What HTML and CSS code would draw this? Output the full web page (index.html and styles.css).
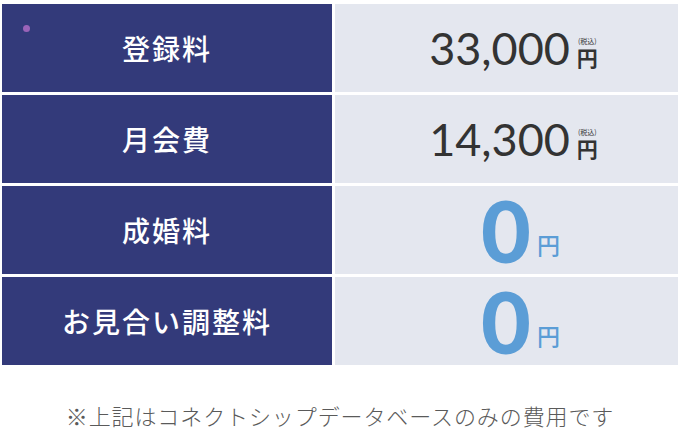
FILE: index.html
```html
<!DOCTYPE html>
<html lang="ja">
<head>
<meta charset="utf-8">
<link rel="stylesheet" href="styles.css">
</head>
<body>
<div class="page">
  <div class="fees">
    <div class="label first"><span class="dot"></span>登録料</div>
    <div class="value price"><span class="num">33,000</span><span class="yen-wrap"><span class="tax">(税込)</span><span class="yen">円</span></span></div>

    <div class="label">月会費</div>
    <div class="value price"><span class="num">14,300</span><span class="yen-wrap"><span class="tax">(税込)</span><span class="yen">円</span></span></div>

    <div class="label">成婚料</div>
    <div class="value free"><span class="zero">0</span><span class="yen-blue">円</span></div>

    <div class="label">お見合い調整料</div>
    <div class="value free"><span class="zero">0</span><span class="yen-blue">円</span></div>
  </div>
  <p class="note">※上記はコネクトシップデータベースのみの費用です</p>
</div>
</body>
</html>
```

FILE: styles.css
```css
* { box-sizing: border-box; }
html, body { margin: 0; padding: 0; background: #ffffff; }
body { width: 680px; height: 441px; overflow: hidden; font-family: "Noto Sans CJK JP", "Noto Sans", sans-serif; }

.page { padding: 4px 2px 0 2px; }

.fees {
  display: grid;
  grid-template-columns: 330px 343px;
  grid-auto-rows: 88px;
  gap: 3px;
}

.label {
  position: relative;
  background: #333a7a;
  color: #ffffff;
  display: flex;
  align-items: center;
  justify-content: center;
  font-size: 28px;
  font-weight: 500;
  letter-spacing: 2px;
}

.dot {
  position: absolute;
  left: 21px;
  top: 21px;
  width: 7px;
  height: 7px;
  border-radius: 50%;
  background: #9a63b8;
}

.value {
  background: #e4e7ef;
  display: flex;
  align-items: center;
  justify-content: center;
  color: #333333;
}

.price { padding-left: 14px; }

.num {
  font-family: Lato, "Noto Sans", sans-serif;
  font-size: 45px;
  font-weight: 400;
  line-height: 44px;
}

.yen-wrap {
  display: flex;
  flex-direction: column;
  align-items: center;
  margin-left: 7px;
  margin-top: 8px;
}

.tax {
  font-size: 7px;
  line-height: 10px;
  color: #333;
}

.yen {
  font-size: 21px;
  font-weight: 700;
  line-height: 22px;
}

.free { padding-left: 28px; }

.zero {
  font-family: Lato, "Noto Sans", sans-serif;
  font-size: 86px;
  font-weight: 900;
  color: #5b9dd6;
  line-height: 80px;
}

.yen-blue {
  font-size: 23px;
  font-weight: 500;
  color: #5b9dd6;
  margin-left: 6px;
  margin-top: 28px;
}

.note {
  margin: 34px 0 0 0;
  text-align: center;
  font-size: 22px;
  font-weight: 300;
  color: #5a5a5a;
  letter-spacing: 0.9px;
}
```
